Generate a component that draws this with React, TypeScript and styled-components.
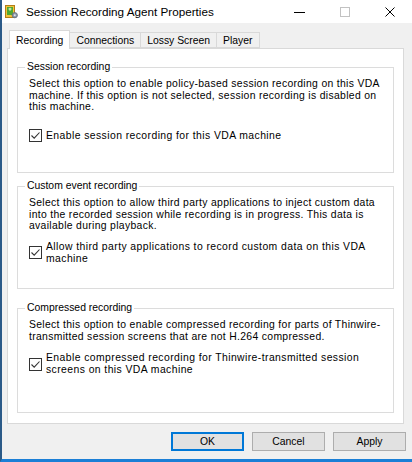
import styled, { createGlobalStyle } from "styled-components";

const GlobalStyle = createGlobalStyle`
  html, body {
    margin: 0;
    padding: 0;
    background: #f0f0f0;
  }
  body {
    font-family: "Liberation Sans", Arial, sans-serif;
    font-size: 10.4px;
    color: #000;
  }
`;

type GroupProps = {
  top: number;
  height: number;
};

const groups = [
  {
    title: "Session recording",
    top: 12,
    height: 112,
    checkGap: 16,
    text: [
      "Select this option to enable policy-based session recording on this VDA",
      "machine. If this option is not selected, session recording is disabled on",
      "this machine.",
    ],
    check: ["Enable session recording for this VDA machine"],
  },
  {
    title: "Custom event recording",
    top: 7,
    height: 109,
    checkGap: 9,
    text: [
      "Select this option to allow third party applications to inject custom data",
      "into the recorded session while recording is in progress. This data is",
      "available during playback.",
    ],
    check: ["Allow third party applications to record custom data on this VDA", "machine"],
  },
  {
    title: "Compressed recording",
    top: 13,
    height: 111,
    checkGap: 10,
    text: [
      "Select this option to enable compressed recording for parts of Thinwire-",
      "transmitted session screens that are not H.264 compressed.",
    ],
    check: ["Enable compressed recording for Thinwire-transmitted session", "screens on this VDA machine"],
  },
];

const tabs = ["Recording", "Connections", "Lossy Screen", "Player"];

const AppIcon = () => (
  <svg width="13" height="15" viewBox="0 0 13 15">
    <rect x="0.5" y="1.5" width="9" height="12" fill="#f2c23a" stroke="#b27d18" />
    <rect x="2" y="3" width="6" height="8" fill="#4ea832" />
    <path d="M3.5 5h3M5 3.8v3" stroke="#e6f5d8" strokeWidth="1" />
    <circle cx="9.8" cy="11.2" r="2.6" fill="#8e9bab" stroke="#5d6878" strokeWidth="0.8" />
    <circle cx="9.8" cy="11.2" r="0.9" fill="#dfe5ec" />
  </svg>
);

const CheckMark = () => (
  <svg width="11" height="11" viewBox="0 0 11 11">
    <polyline points="1.5,5.5 4.2,8.2 9.5,2.5" fill="none" stroke="#333" strokeWidth="1.1" />
  </svg>
);

const App = () => {
  return (
    <Window>
      <GlobalStyle />
      <TitleBar>
        <AppIcon />
        <Title>Session Recording Agent Properties</Title>
        <Controls>
          <ControlButton>
            <MinimizeGlyph />
          </ControlButton>
          <ControlButton>
            <MaximizeGlyph />
          </ControlButton>
          <ControlButton>
            <svg width="10" height="10" viewBox="0 0 10 10">
              <path d="M0.5 0.5l9 9M9.5 0.5l-9 9" stroke="#000" strokeWidth="1" />
            </svg>
          </ControlButton>
        </Controls>
      </TitleBar>

      <Body>
        <TabStrip>
          {tabs.map((t, i) => (
            <Tab key={t} $selected={i === 0}>
              {t}
            </Tab>
          ))}
        </TabStrip>

        <Panel>
          {groups.map((g) => (
            <Group key={g.title} top={g.top} height={g.height}>
              <Legend>{g.title}</Legend>
              <Description>
                {g.text.map((line) => (
                  <Line key={line}>{line}</Line>
                ))}
              </Description>
              <CheckRow $gap={g.checkGap}>
                <CheckBox>
                  <CheckMark />
                </CheckBox>
                <CheckLabel>
                  {g.check.map((line) => (
                    <Line key={line}>{line}</Line>
                  ))}
                </CheckLabel>
              </CheckRow>
            </Group>
          ))}
        </Panel>

        <ButtonRow>
          <DialogButton $primary>OK</DialogButton>
          <DialogButton>Cancel</DialogButton>
          <DialogButton>Apply</DialogButton>
        </ButtonRow>
      </Body>
    </Window>
  );
};

export default App;

const Window = styled.div`
  width: 412px;
  height: 462px;
  box-sizing: border-box;
  display: flex;
  flex-direction: column;
  background: #f0f0f0;
  border-left: 2px solid #2b5a88;
  border-bottom: 3px solid #1b7fd6;
  overflow: hidden;
`;

const TitleBar = styled.div`
  height: 23px;
  flex-shrink: 0;
  display: flex;
  align-items: center;
  background: #fff;
  padding-left: 3px;
`;

const Title = styled.span`
  font-size: 11.7px;
  margin-left: 8px;
  white-space: nowrap;
`;

const Controls = styled.div`
  display: flex;
  margin-left: auto;
  height: 100%;
`;

const ControlButton = styled.div`
  width: 45px;
  display: flex;
  align-items: center;
  justify-content: center;
`;

const MinimizeGlyph = styled.div`
  width: 11px;
  height: 1px;
  background: #000;
  margin-top: 2px;
`;

const MaximizeGlyph = styled.div`
  width: 8px;
  height: 8px;
  border: 1px solid #c2c2c2;
`;

const Body = styled.div`
  flex: 1;
  display: flex;
  flex-direction: column;
  padding: 7px 8px 0 5px;
`;

const TabStrip = styled.div`
  display: flex;
  align-items: flex-end;
  padding-left: 3px;
  margin-bottom: -1px;
  position: relative;
  z-index: 1;
`;

const Tab = styled.div<{ $selected?: boolean }>`
  box-sizing: border-box;
  display: flex;
  align-items: center;
  white-space: nowrap;
  border: 1px solid #d9d9d9;
  height: ${(p) => (p.$selected ? "19px" : "16px")};
  padding: ${(p) => (p.$selected ? "0 6px" : "0 6px")};
  margin-bottom: ${(p) => (p.$selected ? "0" : "1px")};
  margin-left: -1px;
  border-bottom: ${(p) => (p.$selected ? "none" : "1px solid #d9d9d9")};
  background: ${(p) => (p.$selected ? "#fff" : "#f0f0f0")};
  position: relative;
  z-index: ${(p) => (p.$selected ? 2 : 1)};
`;

const Panel = styled.div`
  box-sizing: border-box;
  height: 376px;
  display: flex;
  flex-direction: column;
  padding: 0 9px;
  background: #fff;
  border: 1px solid #d9d9d9;
`;

const Group = styled.fieldset<GroupProps>`
  box-sizing: border-box;
  margin: ${(p) => p.top}px 0 0;
  height: ${(p) => p.height}px;
  padding: 0 2px 0 11px;
  border: 1px solid #dcdcdc;
  min-width: 0;
`;

const Legend = styled.legend`
  margin-left: -4px;
  padding: 0 2px;
  line-height: 12px;
`;

const Description = styled.div`
  margin-top: 5px;
  line-height: 11.7px;
  letter-spacing: 0.32px;
`;

const Line = styled.div`
  white-space: nowrap;
`;

const CheckRow = styled.div<{ $gap: number }>`
  display: flex;
  align-items: center;
  gap: 4px;
  margin-top: ${(p) => p.$gap}px;
`;

const CheckBox = styled.div`
  box-sizing: border-box;
  width: 13px;
  height: 13px;
  flex-shrink: 0;
  border: 1px solid #333;
  background: #fff;
  display: flex;
  align-items: center;
  justify-content: center;
`;

const CheckLabel = styled.div`
  line-height: 11.7px;
  letter-spacing: 0.42px;
`;

const ButtonRow = styled.div`
  display: flex;
  justify-content: flex-end;
  gap: 8px;
  margin-top: 8px;
  margin-right: -2px;
`;

const DialogButton = styled.div<{ $primary?: boolean }>`
  box-sizing: border-box;
  width: 73px;
  height: 19px;
  display: flex;
  align-items: center;
  justify-content: center;
  background: #e1e1e1;
  border: ${(p) => (p.$primary ? "2px solid #0078d7" : "1px solid #adadad")};
`;
